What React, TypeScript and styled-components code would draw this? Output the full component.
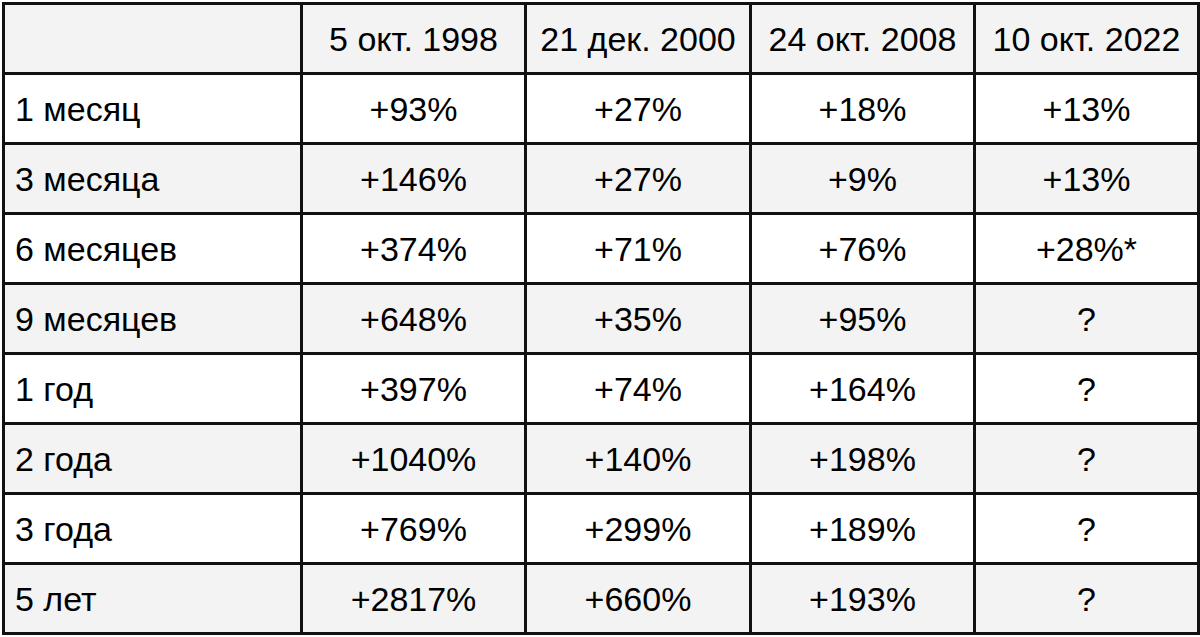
import React from "react";
import styled, { createGlobalStyle } from "styled-components";

const GlobalStyle = createGlobalStyle`
  html, body {
    margin: 0;
    padding: 0;
    background: #ffffff;
  }
`;

const Page = styled.div`
  padding: 2px 3px 0 2px;
  font-family: "Liberation Sans", Arial, sans-serif;
  color: #000;
`;

const Table = styled.table`
  width: 1195px;
  height: 632px;
  border-collapse: collapse;
  table-layout: fixed;
  font-size: 34px;
`;

const Row = styled.tr<{ $shade: boolean }>`
  height: 70px;
  background: ${(p) => (p.$shade ? "#f3f3f3" : "#ffffff")};
`;

const Cell = styled.td<{ $left?: boolean }>`
  border: 3px solid #111;
  padding: 0 ${(p) => (p.$left ? "10px" : "0")};
  text-align: ${(p) => (p.$left ? "left" : "center")};
  vertical-align: middle;
  white-space: nowrap;
  line-height: 1;
`;

const Col = styled.col<{ $w: number }>`
  width: ${(p) => p.$w}px;
`;

const dates = ["5 окт. 1998", "21 дек. 2000", "24 окт. 2008", "10 окт. 2022"];

const rows: [string, string[]][] = [
  ["1 месяц", ["+93%", "+27%", "+18%", "+13%"]],
  ["3 месяца", ["+146%", "+27%", "+9%", "+13%"]],
  ["6 месяцев", ["+374%", "+71%", "+76%", "+28%*"]],
  ["9 месяцев", ["+648%", "+35%", "+95%", "?"]],
  ["1 год", ["+397%", "+74%", "+164%", "?"]],
  ["2 года", ["+1040%", "+140%", "+198%", "?"]],
  ["3 года", ["+769%", "+299%", "+189%", "?"]],
  ["5 лет", ["+2817%", "+660%", "+193%", "?"]],
];

const App: React.FC = () => (
  <>
    <GlobalStyle />
    <Page>
      <Table>
        <colgroup>
          <Col $w={298} />
          <Col $w={224} />
          <Col $w={225} />
          <Col $w={224} />
          <Col $w={224} />
        </colgroup>
        <tbody>
          <Row $shade>
            <Cell $left />
            {dates.map((d) => (
              <Cell key={d}>{d}</Cell>
            ))}
          </Row>
          {rows.map(([label, values], i) => (
            <Row key={label} $shade={i % 2 === 1}>
              <Cell $left>{label}</Cell>
              {values.map((v, j) => (
                <Cell key={j}>{v}</Cell>
              ))}
            </Row>
          ))}
        </tbody>
      </Table>
    </Page>
  </>
);

export default App;
